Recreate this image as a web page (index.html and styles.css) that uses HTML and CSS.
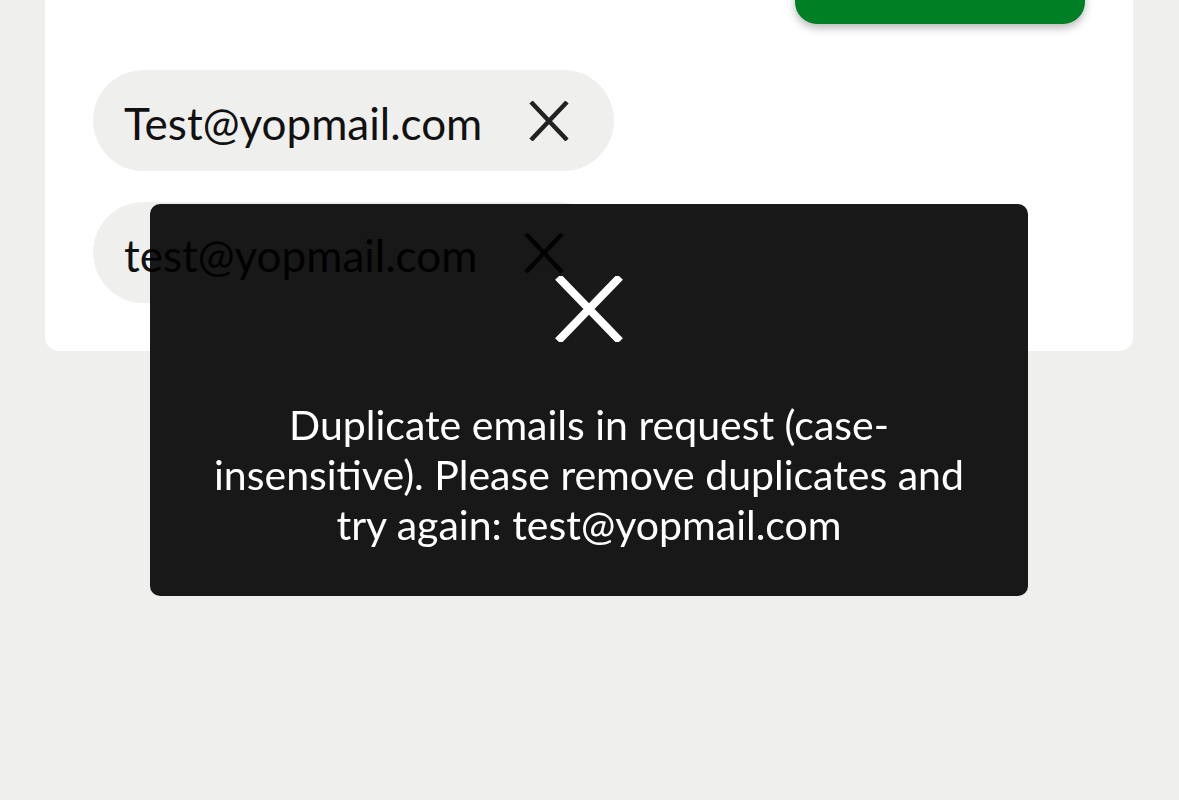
FILE: index.html
```
<!DOCTYPE html>
<html lang="en">
<head>
<meta charset="utf-8">
<title>Invite</title>
<link rel="stylesheet" href="styles.css">
</head>
<body>
<div class="page">
  <div class="card">
    <div class="actions">
      <button class="primary" type="button" aria-label="Send invites"></button>
    </div>
    <div class="chips">
      <div class="chip">
        <span class="chip-text">Test@yopmail.com</span>
        <svg class="chip-x" viewBox="0 0 42 40" aria-hidden="true"><path d="M3 1 L39 39 M39 1 L3 39" /></svg>
      </div>
      <div class="chip">
        <span class="chip-text">test@yopmail.com</span>
        <svg class="chip-x" viewBox="0 0 42 40" aria-hidden="true"><path d="M3 1 L39 39 M39 1 L3 39" /></svg>
      </div>
    </div>
  </div>
</div>
<div class="toast" role="alert">
  <svg class="toast-x" viewBox="0 0 68 66" aria-hidden="true"><path d="M3 1 L65 65 M65 1 L3 65" /></svg>
  <p class="toast-text">Duplicate emails in request (case-insensitive). Please remove duplicates and try again: test@yopmail.com</p>
</div>
</body>
</html>
```
FILE: styles.css
```
html, body {
  margin: 0;
  padding: 0;
}
body {
  background: #efefed;
  font-family: Lato, "Open Sans", sans-serif;
  color: #111;
  height: 800px;
  overflow: hidden;
}
.page {
  padding: 0 46px 0 45px;
}
.card {
  background: #fff;
  border-radius: 0 0 14px 14px;
  margin-top: -124px;
  padding: 48px;
}
.actions {
  display: flex;
  justify-content: flex-end;
}
.primary {
  width: 290px;
  height: 100px;
  border: none;
  border-radius: 22px;
  background: #007f24;
  box-shadow: 0 4px 8px rgba(0, 0, 0, 0.28);
}
.chips {
  margin-top: 46px;
  display: flex;
  flex-direction: column;
  align-items: flex-start;
  gap: 31px;
}
.chip {
  display: flex;
  align-items: center;
  height: 101px;
  box-sizing: border-box;
  padding: 0 44px 0 31px;
  background: #efefed;
  border-radius: 51px;
}
.chip-text {
  font-size: 44px;
  color: #111;
  line-height: 1;
  padding-top: 4px;
}
.chip-x {
  width: 42px;
  height: 40px;
  margin-left: 46px;
  fill: none;
  stroke: #222;
  stroke-width: 4.5;
}
.toast {
  position: fixed;
  left: 150px;
  top: 204px;
  width: 878px;
  height: 392px;
  box-sizing: border-box;
  background: rgba(0, 0, 0, 0.9);
  border-radius: 10px;
  display: flex;
  flex-direction: column;
  align-items: center;
  padding: 72px 56px 0;
}
.toast-x {
  width: 68px;
  height: 66px;
  fill: none;
  stroke: #fff;
  stroke-width: 8;
}
.toast-text {
  margin: 58px 0 0;
  color: #fff;
  font-size: 41px;
  line-height: 50px;
  text-align: center;
}
```
